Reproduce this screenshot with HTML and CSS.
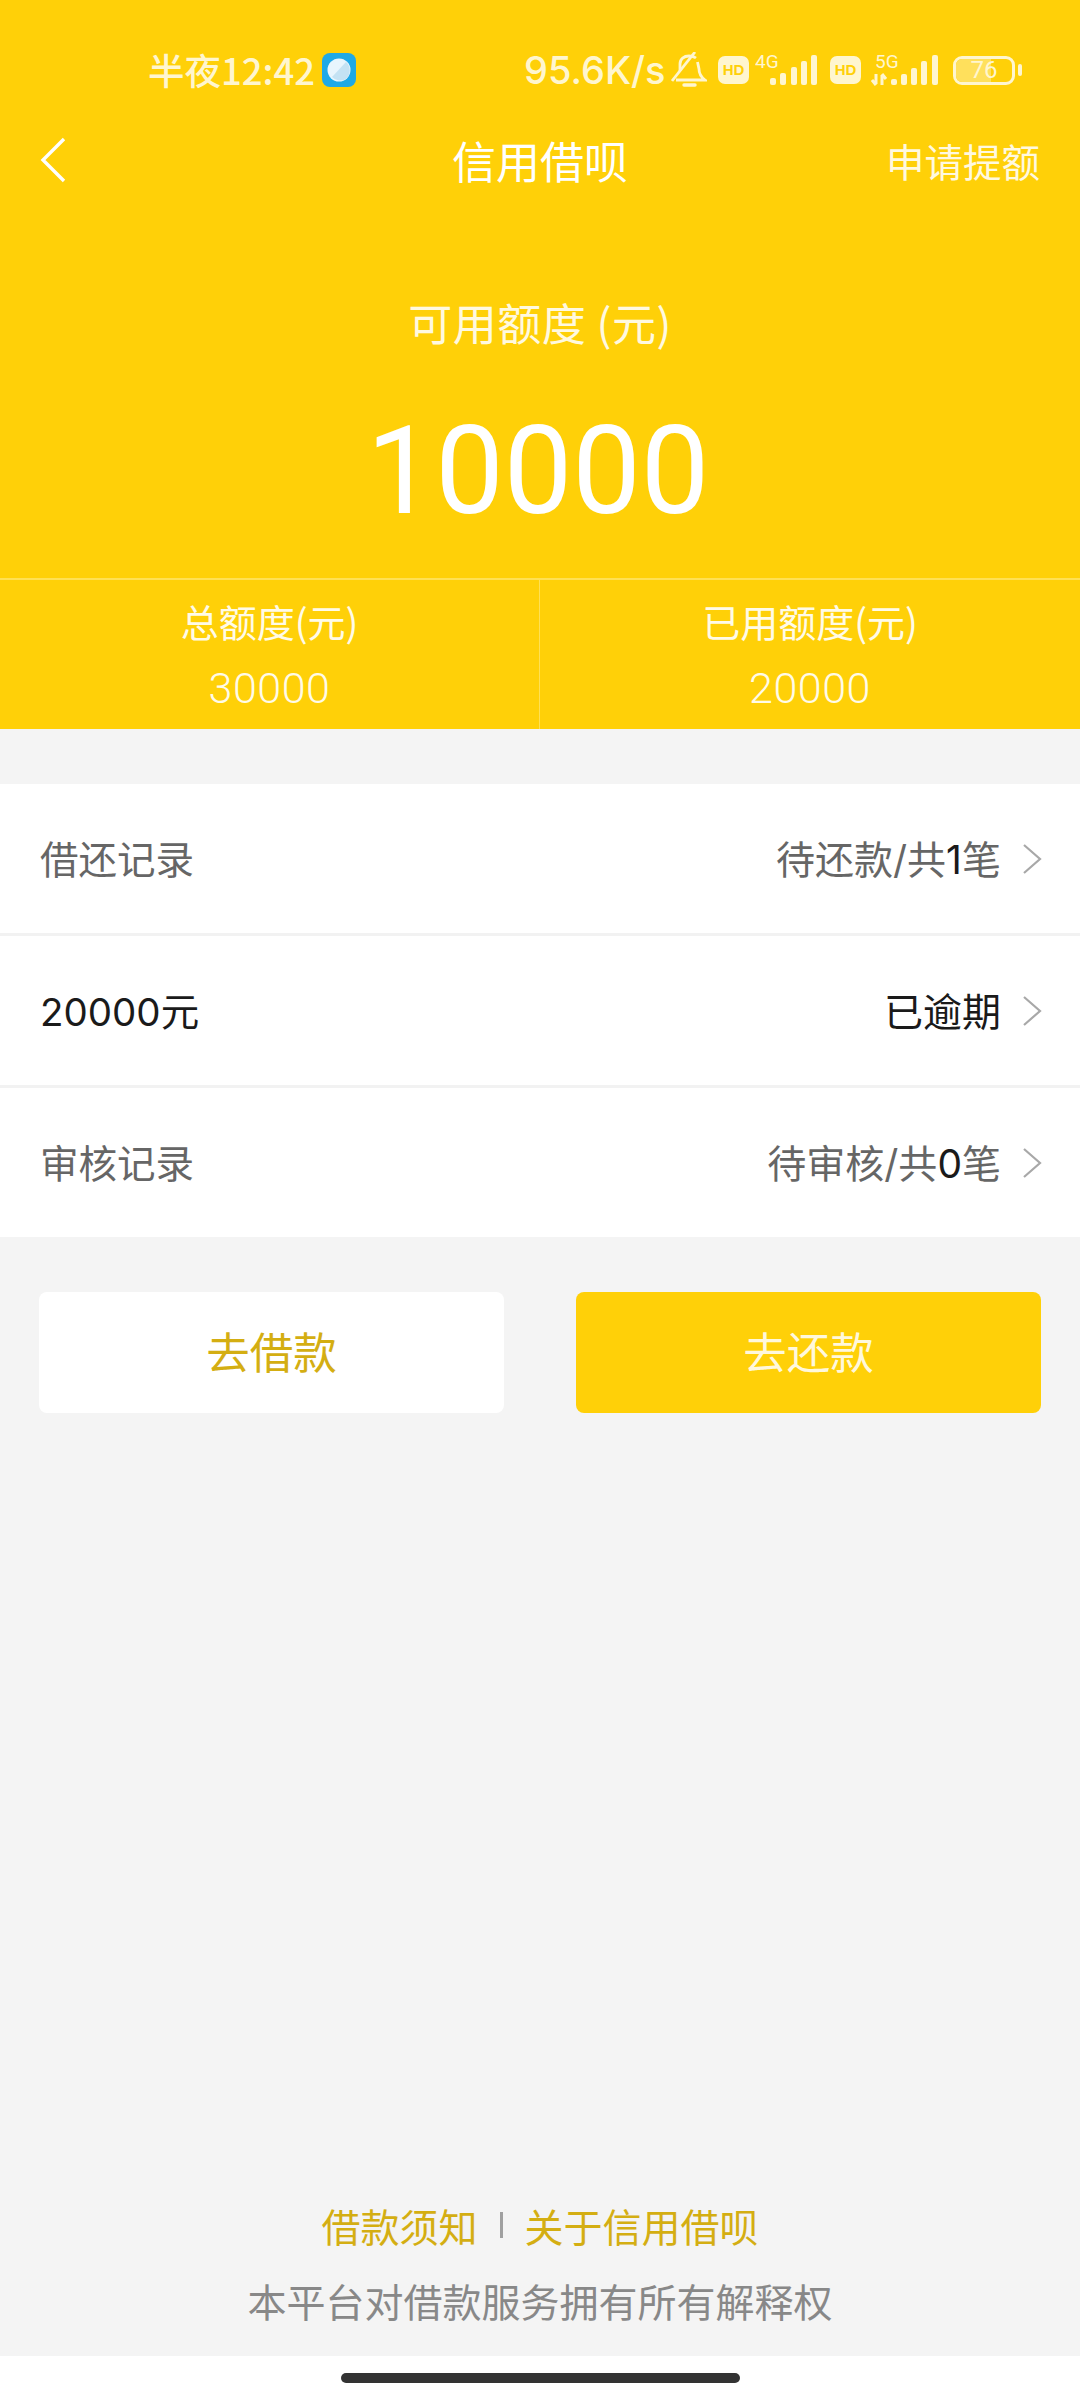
FILE: index.html
```html
<!DOCTYPE html>
<html lang="zh-CN">
<head>
    <meta charset="UTF-8">
    <meta name="viewport" content="width=device-width, initial-scale=1.0">
    <title>信用借呗</title>
    <link rel="stylesheet" href="styles.css">
</head>
<body>
    <div class="page">
        <div class="hero">
            <div class="status-bar">
                <span class="clock">半夜12:42</span>
                <svg class="app-icon" width="34" height="34" viewBox="0 0 34 34">
                    <rect x="0" y="0" width="34" height="34" rx="8" fill="#1fa9e6"/>
                    <circle cx="17" cy="17" r="11.5" fill="#e8f5fd"/>
                    <path d="M10 24 L24 9 A11.5 11.5 0 0 1 24 26 A11.5 11.5 0 0 1 10 24 Z" fill="#c4e2f3"/>
                </svg>
                <span class="speed">95.6K/s</span>
                <svg class="bell" width="36" height="36" viewBox="0 0 36 36" fill="none" stroke="#fff6cf" stroke-width="2.8">
                    <path d="M5 28 H34 C30 25 28 22 28 17 L26.5 10"/>
                    <path d="M9 19 V12 C9 7 13 4 18 4 C21 4 23 4.5 25 6"/>
                    <path d="M1 29 L24 0"/>
                    <path d="M13 33 H24" stroke-width="3.4" stroke-linecap="round"/>
                </svg>
                <span class="hd hd-first">HD</span>
                <svg class="signal" width="62" height="48" viewBox="0 -8 62 48">
                    <text class="net-label" x="0" y="14">4G</text>
                    <rect x="15" y="24" width="6" height="7" rx="2" fill="#fff6cf"/>
                    <rect x="25" y="19" width="6" height="12" rx="2" fill="#fff6cf"/>
                    <rect x="36" y="13" width="6" height="18" rx="2" fill="#fff6cf"/>
                    <rect x="46" y="7" width="6" height="24" rx="2" fill="#fff6cf"/>
                    <rect x="56" y="1" width="6" height="30" rx="2" fill="#fff6cf"/>
                </svg>
                <span class="hd hd-second">HD</span>
                <svg class="signal signal-5g" width="68" height="48" viewBox="0 -8 68 48">
                    <text class="net-label" x="4" y="14">5G</text>
                    <path d="M5 20 V30 M1 26 L5 31 M11 31 V21 M11 20 L15 25" stroke="#fff6cf" stroke-width="3" fill="none"/>
                    <rect x="20" y="25" width="6" height="6" rx="2" fill="#fff6cf"/>
                    <rect x="30" y="20" width="6" height="11" rx="2" fill="#fff6cf"/>
                    <rect x="40" y="14" width="6" height="17" rx="2" fill="#fff6cf"/>
                    <rect x="50" y="7" width="6" height="24" rx="2" fill="#fff6cf"/>
                    <rect x="61" y="1" width="6" height="30" rx="2" fill="#fff6cf"/>
                </svg>
                <div class="battery">
                    <div class="battery-body">
                        <div class="battery-fill"></div>
                        <span class="battery-num">76</span>
                    </div>
                    <div class="battery-nub"></div>
                </div>
            </div>

            <div class="nav">
                <svg class="back" width="26" height="46" viewBox="0 0 26 46" fill="none" stroke="#fff" stroke-width="3.4">
                    <path d="M24 2 L3 23 L24 44"/>
                </svg>
                <h1 class="nav-title">信用借呗</h1>
                <span class="nav-action">申请提额</span>
            </div>

            <div class="limit-label">可用额度 (元)</div>
            <div class="limit-value">10000</div>

            <div class="totals">
                <div class="total-cell">
                    <div class="total-label">总额度(元)</div>
                    <div class="total-value">30000</div>
                </div>
                <div class="total-cell">
                    <div class="total-label">已用额度(元)</div>
                    <div class="total-value">20000</div>
                </div>
            </div>
        </div>

        <div class="list">
            <div class="row">
                <span class="row-name">借还记录</span>
                <span class="row-info">待还款/共<b class="count">1</b>笔</span>
                <svg class="chevron" width="20" height="32" viewBox="0 0 20 32" fill="none" stroke="#a8a8a8" stroke-width="2.2"><path d="M2 2 L18 16 L2 30"/></svg>
            </div>
            <div class="row">
                <span class="row-name row-dark">20000元</span>
                <span class="row-info row-dark">已逾期</span>
                <svg class="chevron" width="20" height="32" viewBox="0 0 20 32" fill="none" stroke="#a8a8a8" stroke-width="2.2"><path d="M2 2 L18 16 L2 30"/></svg>
            </div>
            <div class="row">
                <span class="row-name">审核记录</span>
                <span class="row-info">待审核/共<b class="count">0</b>笔</span>
                <svg class="chevron" width="20" height="32" viewBox="0 0 20 32" fill="none" stroke="#a8a8a8" stroke-width="2.2"><path d="M2 2 L18 16 L2 30"/></svg>
            </div>
        </div>

        <div class="actions">
            <button class="btn btn-light">去借款</button>
            <button class="btn btn-main">去还款</button>
        </div>

        <div class="footer">
            <div class="links">
                <span>借款须知</span>
                <i class="sep"></i>
                <span>关于信用借呗</span>
            </div>
            <div class="notice">本平台对借款服务拥有所有解释权</div>
        </div>

        <div class="home-area">
            <div class="home-bar"></div>
        </div>
    </div>
</body>
</html>
```

FILE: styles.css
```css
* { box-sizing: border-box; }
body { margin: 0; background: #f4f4f4; font-family: "Noto Sans CJK SC", "Noto Sans", sans-serif; }
.page { width: 1080px; height: 2400px; display: flex; flex-direction: column; }

.hero { height: 729px; background: #ffd008; color: #fff; display: flex; flex-direction: column; }

.status-bar { height: 127px; padding: 13px 0 0 148px; display: flex; align-items: center; color: #fff6cf; }
.clock { font-size: 36.5px; font-weight: 500; width: 166px; white-space: nowrap; line-height: 44px; }
.app-icon { margin-left: 8px; }
.speed { margin-left: 168px; width: 141px; font-family: Inter, Roboto, sans-serif; font-size: 38px; font-weight: 500; white-space: nowrap; }
.bell { margin-left: 6px; }
.hd { width: 31px; height: 28px; border-radius: 7px; background: #fff6cf; color: #ffd008; font-family: "Liberation Sans", sans-serif; font-size: 15px; font-weight: bold; line-height: 28px; text-align: center; }
.hd-first { margin-left: 11px; }
.hd-second { margin-left: 13px; }
.signal { margin-left: 6px; }
.signal-5g { margin-left: 10px; }
.net-label { font-family: Roboto, sans-serif; font-size: 19px; fill: #fff6cf; }
.battery { margin-left: 14px; display: flex; align-items: center; gap: 3px; }
.battery-body { position: relative; width: 62px; height: 29px; border: 3px solid #fff6cf; border-radius: 9px; overflow: hidden; text-align: center; }
.battery-fill { width: 62%; height: 100%; background: #ffe05c; }
.battery-num { position: absolute; left: 0; right: 0; top: 0; font-family: Roboto, sans-serif; font-size: 24px; line-height: 23px; color: #fff6cf; }
.battery-nub { width: 4px; height: 12px; border-radius: 2px; background: #fff6cf; }

.nav { height: 66px; padding: 0 40px; display: grid; grid-template-columns: 1fr auto 1fr; align-items: center; }
.back { display: block; }
.nav-title { margin: 0; font-size: 44px; font-weight: 400; line-height: 66px; }
.nav-action { justify-self: end; font-size: 38.5px; line-height: 66px; color: #fff9e0; }

.limit-label { margin-top: 99px; height: 60px; font-size: 44px; letter-spacing: 0.5px; line-height: 60px; text-align: center; color: #fff9e0; }
.limit-value { margin-top: 38px; height: 160px; padding-right: 4px; font-family: Roboto, sans-serif; font-weight: 400; font-size: 122px; line-height: 164px; text-align: center; }

.totals { margin-top: 28px; flex: 1; display: grid; grid-template-columns: 1fr 1fr; border-top: 2px solid #ffe054; }
.total-cell { text-align: center; padding-top: 14px; color: #fffbe8; }
.total-cell:first-child { border-right: 1px solid #ffe054; }
.total-label { font-size: 38px; line-height: 54px; }
.total-value { margin-top: 13px; font-family: Roboto, sans-serif; font-weight: 300; font-size: 43px; letter-spacing: 0.5px; line-height: 54px; }

.list { margin-top: 55px; background: #fff; }
.row { height: 149px; padding: 0 38px 0 40px; display: flex; align-items: center; font-family: Inter, "Noto Sans CJK SC", sans-serif; }
.row + .row { height: 152px; border-top: 3px solid #f2f2f2; }
.row-name { flex: 1; padding-bottom: 4px; font-size: 38.5px; color: #666; }
.row-info { padding-bottom: 4px; font-size: 39px; color: #666; }
.row-dark { color: #1a1a1a; }
.count { font-weight: 400; color: #1a1a1a; }
.chevron { margin-left: 21px; }

.actions { margin-top: 55px; padding: 0 39px; display: grid; grid-template-columns: 465px 465px; justify-content: space-between; }
.btn { height: 121px; padding: 0 0 4px; border: none; border-radius: 8px; font-family: inherit; font-size: 43.5px; }
.btn-light { background: #fff; color: #d4ae12; }
.btn-main { background: #ffd008; color: #fff8dc; }

.footer { margin-top: auto; height: 169px; padding-top: 8px; text-align: center; }
.links { height: 60px; display: flex; justify-content: center; align-items: center; font-size: 39px; line-height: 60px; color: #d4ae12; }
.sep { width: 3px; height: 26px; margin: 0 22px; background: #a0a0a0; }
.notice { margin-top: 15px; font-size: 39px; line-height: 60px; color: #888; }

.home-area { height: 44px; background: #fff; padding-top: 17px; }
.home-bar { width: 399px; height: 10px; margin: 0 auto; border-radius: 5px; background: #333; }
```
